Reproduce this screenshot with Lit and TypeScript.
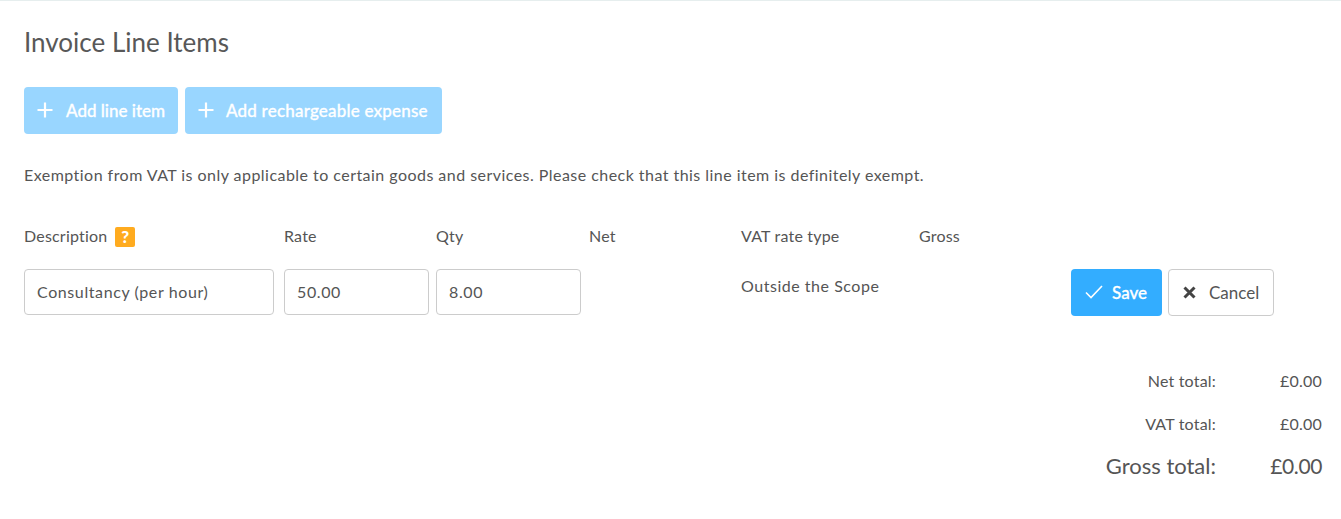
import { LitElement, html, css, svg } from "lit";
import { customElement } from "lit/decorators.js";

const plus = svg`<path d="M8 0.5v15M0.5 8h15" fill="none" stroke="#fff" stroke-width="2.2"/>`;
const check = svg`<path d="M1 9.5l5 5L17 3" fill="none" stroke="#fff" stroke-width="1.6"/>`;
const cross = svg`<path d="M1.5 1.5l10 10M11.5 1.5l-10 10" fill="none" stroke="#444" stroke-width="3"/>`;

@customElement("app-root")
export class AppRoot extends LitElement {
  static styles = css`
    :host {
      display: block;
      box-sizing: border-box;
      height: 519px;
      border-top: 1px solid #e6eeee;
      padding: 0 19px 0 24px;
      background: #fff;
      color: #555;
      font-family: Lato, "Open Sans", sans-serif;
      font-size: 16px;
      overflow: hidden;
    }
    h1 {
      margin: 0;
      padding-top: 25px;
      font-size: 26px;
      line-height: 32px;
      font-weight: 400;
      color: #585858;
    }
    .actions {
      display: flex;
      gap: 7px;
      margin-top: 29px;
    }
    .btn {
      display: flex;
      align-items: center;
      box-sizing: border-box;
      height: 47px;
      padding-bottom: 1px;
      border-radius: 4px;
      font-size: 17px;
      font-weight: 500;
      color: #fff;
      -webkit-text-stroke: 0.3px #fff;
    }
    .btn.light { background: #99d6ff; padding-left: 13px; }
    .btn.light svg { margin-right: 13px; }
    .add-item { width: 154px; }
    .add-exp { width: 257px; letter-spacing: 0.2px; }
    .btn.light.add-exp svg { margin-right: 12px; }
    .note {
      margin: 30px 0 0;
      line-height: 22px;
      font-size: 16px;
      letter-spacing: 0.46px;
    }
    .grid {
      display: grid;
      grid-template-columns: 260px 152px 153px 152px 178px 152px auto;
      margin-top: 39px;
    }
    .head {
      height: 44px;
      line-height: 22px;
      display: flex;
      gap: 8px;
      align-items: flex-start;
      letter-spacing: 0.2px;
    }
    .help {
      display: block;
      width: 20px;
      height: 20px;
      margin-top: 2px;
      border-radius: 2px;
      background: #ffab1f;
      color: #fff;
      font-weight: 900;
      font-size: 17px;
      line-height: 20px;
      text-align: center;
    }
    .field {
      display: flex;
      align-items: center;
      box-sizing: border-box;
      height: 46px;
      padding-left: 12px;
      border: 1px solid #ccc;
      border-radius: 4px;
      background: #fff;
      color: #555;
      line-height: 22px;
      letter-spacing: 0.6px;
    }
    .f-desc { width: 250px; }
    .f-num { width: 145px; }
    .text { line-height: 34px; letter-spacing: 0.53px; }
    .btns { display: flex; gap: 6px; }
    .save {
      width: 91px;
      background: #33adff;
      padding-left: 14px;
    }
    .save svg { margin-right: 9px; }
    .cancel {
      width: 106px;
      height: 47px;
      background: #fff;
      border: 1px solid #ccc;
      color: #555;
      padding-left: 14px;
      font-weight: 400;
      -webkit-text-stroke: 0;
    }
    .cancel svg { margin-right: 13px; }
    .totals {
      display: grid;
      grid-template-columns: 1fr 106px;
      margin-top: 54px;
      text-align: right;
      line-height: 22px;
      letter-spacing: 0.2px;
    }
    .totals div { margin-bottom: 21px; }
    .totals .big {
      font-size: 22px;
      line-height: 28px;
      margin-top: -4px;
      letter-spacing: 0;
    }
    .totals .big.val { font-size: 21px; letter-spacing: -0.4px; }
  `;

  render() {
    return html`
      <h1>Invoice Line Items</h1>
      <div class="actions">
        <div class="btn light add-item">
          <svg width="16" height="16" viewBox="0 0 16 16">${plus}</svg>Add line item
        </div>
        <div class="btn light add-exp">
          <svg width="16" height="16" viewBox="0 0 16 16">${plus}</svg>Add rechargeable expense
        </div>
      </div>
      <p class="note">Exemption from VAT is only applicable to certain goods and services. Please check that this line item is definitely exempt.</p>
      <div class="grid">
        <div class="head">Description <span class="help">?</span></div>
        <div class="head">Rate</div>
        <div class="head">Qty</div>
        <div class="head">Net</div>
        <div class="head">VAT rate type</div>
        <div class="head">Gross</div>
        <div class="head"></div>
        <div><div class="field f-desc">Consultancy (per hour)</div></div>
        <div><div class="field f-num">50.00</div></div>
        <div><div class="field f-num">8.00</div></div>
        <div></div>
        <div class="text">Outside the Scope</div>
        <div></div>
        <div class="btns">
          <div class="btn save">
            <svg width="18" height="18" viewBox="0 0 18 18">${check}</svg>Save
          </div>
          <div class="btn cancel">
            <svg width="13" height="13" viewBox="0 0 13 13">${cross}</svg>Cancel
          </div>
        </div>
      </div>
      <div class="totals">
        <div>Net total:</div><div>£0.00</div>
        <div>VAT total:</div><div>£0.00</div>
        <div class="big">Gross total:</div><div class="big val">£0.00</div>
      </div>
    `;
  }
}
